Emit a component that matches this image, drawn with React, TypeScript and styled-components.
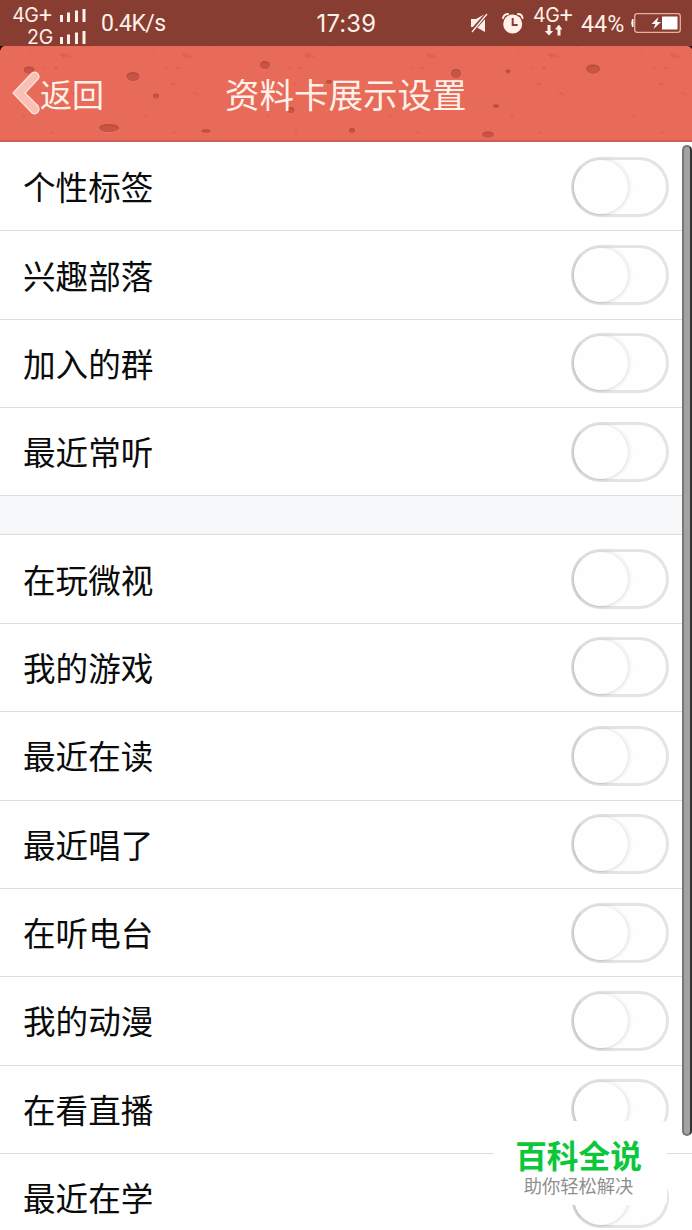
import React from "react";
import styled, { createGlobalStyle } from "styled-components";

const GlobalStyle = createGlobalStyle`
  * { box-sizing: border-box; }
  body { margin: 0; background: #fff; overflow: hidden; }
`;

const cjk = `"Noto Sans CJK SC", sans-serif`;

const Screen = styled.div`
  position: relative;
  width: 692px;
  height: 1230px;
  overflow: hidden;
  background: #fff;
  font-family: ${cjk};
`;

const StatusBar = styled.div`
  display: flex;
  height: 46px;
  padding-left: 11px;
  background: #873d31;
  color: #fff0e9;
  white-space: nowrap;
`;

const Carriers = styled.div`
  display: flex;
  flex-direction: column;
  width: 42px;
  padding-top: 5px;
  align-items: flex-end;
`;

const StatusText = styled.span<{ $size: number; $width?: number; $line?: number; $top?: number; $left?: number; $spacing?: number; $inter?: boolean }>`
  flex: none;
  width: ${(p) => (p.$width ? `${p.$width}px` : "auto")};
  margin-top: ${(p) => p.$top ?? 0}px;
  margin-left: ${(p) => p.$left ?? 0}px;
  font-family: ${(p) => (p.$inter ? "Inter" : "Roboto")}, sans-serif;
  font-size: ${(p) => p.$size}px;
  line-height: ${(p) => p.$line ?? 24}px;
  letter-spacing: ${(p) => p.$spacing ?? 0}px;
`;

const Plus = styled.span`
  font-size: 24px;
  line-height: 1px;
  margin-left: -1px;
`;

const StatusIcon = styled.svg<{ $left?: number }>`
  flex: none;
  display: block;
  margin-left: ${(p) => p.$left ?? 0}px;
`;

const Network = styled.div`
  display: flex;
  flex-direction: column;
  flex: none;
  width: 42px;
  margin-left: 9px;
  padding-top: 5px;
`;

const Header = styled.header`
  position: relative;
  display: flex;
  align-items: center;
  height: 96px;
  background: #e86a58;
  border-bottom: 2px solid #cc5f58;
  color: #fff1e8;
`;

const Texture = styled.svg`
  position: absolute;
  inset: 0;
`;

const Back = styled.button`
  position: relative;
  display: flex;
  align-items: center;
  width: 225px;
  padding: 0 0 0 11px;
  border: 0;
  background: none;
  color: inherit;
  font: 400 32px/48px ${cjk};
`;

const BackLabel = styled.span`
  margin-top: -1px;
`;

const Title = styled.h1`
  position: relative;
  margin: 0;
  font-size: 34.5px;
  line-height: 50px;
  font-weight: 400;
  white-space: nowrap;
`;

const Group = styled.section<{ $top?: number }>`
  padding-top: ${(p) => p.$top ?? 0}px;
`;

const Divider = styled.div`
  height: 38.6px;
  background: #f7f8fa;
  border-bottom: 1px solid #dedede;
`;

const Row = styled.div`
  display: flex;
  align-items: center;
  justify-content: space-between;
  height: 88.35px;
  padding: 0 23px;
  border-bottom: 1px solid #dedede;
`;

const Label = styled.span`
  margin-top: -1px;
  color: #0b0b0b;
  font-size: 32.6px;
  line-height: 48px;
`;

const Track = styled.button`
  display: flex;
  width: 98px;
  height: 60px;
  padding: 0;
  border: 3px solid #e4e4e4;
  border-left-color: #dcdcdc;
  border-radius: 30px;
  background: #fefefe;
`;

const Knob = styled.span`
  width: 54px;
  height: 54px;
  border-radius: 50%;
  background: #fefefe;
  box-shadow: 1px 0 4px rgba(0, 0, 0, 0.13), -1px 1px 2px rgba(0, 0, 0, 0.09);
`;

const Scrollbar = styled.div`
  position: absolute;
  top: 145px;
  right: 0;
  width: 10px;
  height: 991px;
  border: 2px solid #777;
  border-right: 2px solid #333;
  border-radius: 5px;
  background: #a3a3a3;
`;

const Watermark = styled.div`
  position: absolute;
  left: 494px;
  top: 1121px;
  width: 173px;
  height: 84px;
  padding-top: 17px;
  border-radius: 4px;
  background: #fff;
  text-align: center;
  white-space: nowrap;
`;

const Brand = styled.div`
  margin-left: -4px;
  color: #0bc73a;
  font-size: 31.7px;
  line-height: 32px;
  font-weight: 700;
`;

const Slogan = styled.div`
  margin: 5px 0 0 -4px;
  color: #8f8f8f;
  font-size: 18.3px;
  line-height: 20px;
`;

const pits: [number, number, number, number][] = [
  [29, 24, 5.5, 3.5], [133, 30.5, 6.5, 4.5], [156, 50, 3, 2.5], [109, 82, 10, 4],
  [206, 85, 4.5, 1.8], [265, 19, 5, 4], [329, 36, 3, 2], [291, 64, 3.5, 3],
  [352, 84.5, 3, 2.5], [456, 27.5, 5, 4.5], [508, 25.5, 2.5, 2], [593, 23, 7, 4.5],
  [496, 60, 3, 1.8], [488, 88.5, 6, 3],
];

const tiles = [0, 122, 244, 366, 488, 610];

function HeaderTexture() {
  return (
    <Texture width="692" height="94" viewBox="0 0 692 94">
      <g fill="#d55a4b" opacity=".5">
        {tiles.map((x) => (
          <g key={x}>
            <path d={`M${x + 60} 8l4-1 7 4-1 1-5-1-2 2zM${x + 83} 1l9-1-1 1zM${x + 70} 45l6 3 2 2-6-2z`} />
            <ellipse cx={x + 56} cy="22" rx="1.8" ry="1.2" />
            <ellipse cx={x + 45} cy="22" rx="1.4" ry=".8" />
            <ellipse cx={x + 51} cy="38" rx="2" ry="1.2" />
            <ellipse cx={x + 31} cy="5" rx="1" ry=".8" />
            <ellipse cx={x + 52} cy="87" rx="1.2" ry="1.2" />
            <ellipse cx={x + 24} cy="70" rx="1.3" ry="1.2" />
          </g>
        ))}
      </g>
      {pits.map(([x, y, rx, ry]) => (
        <g key={`${x}-${y}`}>
          <ellipse cx={x} cy={y + 0.8} rx={rx + 0.5} ry={ry} fill="#ec7563" />
          <ellipse cx={x} cy={y} rx={rx} ry={ry} fill="#b94a3c" />
          <ellipse cx={x} cy={y + 0.7} rx={rx - 0.8} ry={ry - 0.8} fill="#c75545" />
        </g>
      ))}
      <path d="M0 0H4Q1 1 0 5ZM692 0H688Q691 1 692 3Z" fill="#210805" />
    </Texture>
  );
}

function Status() {
  return (
    <StatusBar>
      <Carriers>
        <StatusText $size={19.5} $line={20} $spacing={-0.4} $inter>4G<Plus>+</Plus></StatusText>
        <StatusText $size={19.5} $line={22} $top={1} $spacing={-0.2} $inter>2G</StatusText>
      </Carriers>
      <StatusIcon $left={5} width="30" height="46" viewBox="58 0 30 46">
        <g fill="#fff0e9">
          <path d="M60 15h3v7h-3zM67 12.5h3V22h-3zM75 10.5h3V22h-3zM82.5 9h3v13h-3z" />
          <path d="M60 37h3v7h-3zM67 34.5h3V44h-3zM75 32.5h3V44h-3zM82.5 31h3v13h-3z" />
        </g>
      </StatusIcon>
      <StatusText $size={23} $width={215} $top={12} $left={13} $spacing={-0.5}>0.4K/s</StatusText>
      <StatusText $size={23.8} $width={150} $top={12} $left={0.5} $inter $spacing={0.2}>17:39</StatusText>
      <StatusIcon $left={2.5} width="22" height="46" viewBox="469 0 22 46">
        <path d="M471 19h5l9-5v18l-9-5h-5z" fill="#fff0e9" />
        <path d="M471 32 487 14" stroke="#873d31" strokeWidth="4" />
        <path d="M472 32 487 14" stroke="#fff0e9" strokeWidth="1.3" />
      </StatusIcon>
      <StatusIcon $left={11} width="22" height="46" viewBox="502 0 22 46">
        <circle cx="512.7" cy="24" r="9.5" fill="#fff0e9" />
        <path d="M512.7 18v7h5" fill="none" stroke="#873d31" strokeWidth="2" />
        <path d="M503 18q1-4 5-4M518 14q4 0 4.5 4" fill="none" stroke="#fff0e9" strokeWidth="2" strokeLinecap="round" />
      </StatusIcon>
      <Network>
        <StatusText $size={19.5} $line={20} $spacing={-0.4} $inter>4G<Plus>+</Plus></StatusText>
        <StatusIcon $left={12} width="17" height="12" viewBox="0 0 17 12">
          <path d="M2.5-1h3v7h2.7L4 10.5-.2 6h2.7zM12.5 10.5h3V4.5h2L13.8-.4 10 4.5h2.5z" fill="#fff0e9" />
        </StatusIcon>
      </Network>
      <StatusText $size={23.3} $width={46} $top={12} $left={6}>44%</StatusText>
      <StatusIcon $left={2} width="54" height="46" viewBox="629 0 54 46">
        <rect x="634.7" y="13.7" width="45.6" height="18.6" rx="2.5" fill="none" stroke="#e9b0a2" strokeWidth="1.3" />
        <path d="M633.5 19h-1.5q-1.5 4 0 8h1.5zM662 16.5h15.5v13H662zM658.5 17l-7 7h4l-2 5 7.5-7h-4z" fill="#fff" />
      </StatusIcon>
    </StatusBar>
  );
}

function SettingRow({ label }: { label: string }) {
  return (
    <Row>
      <Label>{label}</Label>
      <Track type="button" role="switch" aria-checked="false" aria-label={label}>
        <Knob />
      </Track>
    </Row>
  );
}

const general = ["个性标签", "兴趣部落", "加入的群", "最近常听"];
const activity = ["在玩微视", "我的游戏", "最近在读", "最近唱了", "在听电台", "我的动漫", "在看直播", "最近在学"];

export default function App() {
  return (
    <Screen>
      <GlobalStyle />
      <Status />
      <Header>
        <HeaderTexture />
        <Back type="button">
          <svg width="29" height="46" viewBox="0 0 29 46">
            <path d="M2 23 21 3q3-2 6 1 2 3 0 5L14 23l13 13q2 3 0 6-3 3-6 1z" fill="#f9c1b5" stroke="#ffe2d8" strokeWidth="1.3" />
          </svg>
          <BackLabel>返回</BackLabel>
        </Back>
        <Title>资料卡展示设置</Title>
      </Header>
      <Group $top={1}>
        {general.map((label) => <SettingRow key={label} label={label} />)}
      </Group>
      <Divider />
      <Group $top={0.5}>
        {activity.map((label) => <SettingRow key={label} label={label} />)}
      </Group>
      <Scrollbar />
      <Watermark>
        <Brand>百科全说</Brand>
        <Slogan>助你轻松解决</Slogan>
      </Watermark>
    </Screen>
  );
}
